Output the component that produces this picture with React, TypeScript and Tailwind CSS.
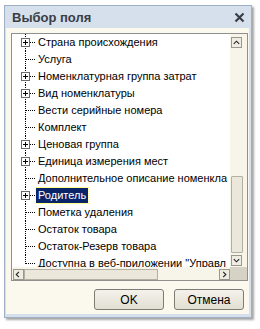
import React from "react";

type Item = { label: string; expandable?: boolean; selected?: boolean };

const items: Item[] = [
  { label: "Страна происхождения", expandable: true },
  { label: "Услуга" },
  { label: "Номенклатурная группа затрат", expandable: true },
  { label: "Вид номенклатуры", expandable: true },
  { label: "Вести серийные номера" },
  { label: "Комплект" },
  { label: "Ценовая группа", expandable: true },
  { label: "Единица измерения мест", expandable: true },
  { label: "Дополнительное описание номенкла" },
  { label: "Родитель", expandable: true, selected: true },
  { label: "Пометка удаления" },
  { label: "Остаток товара" },
  { label: "Остаток-Резерв товара" },
  { label: "Доступна в веб-приложении \"Управл" },
];

function TreeLines({ expandable, last }: { expandable?: boolean; last?: boolean }) {
  return (
    <svg width="24" height="17" className="shrink-0" shapeRendering="crispEdges">
      <line x1="13.5" y1="0" x2="13.5" y2={last ? 8.5 : 17} stroke="#000" strokeDasharray="1 1" />
      <line x1="14" y1="8.5" x2="24" y2="8.5" stroke="#000" strokeDasharray="1 1" />
      {expandable && (
        <>
          <rect x="9.5" y="4.5" width="8" height="8" fill="#fff" stroke="#6b6b6b" />
          <line x1="11" y1="8.5" x2="16" y2="8.5" stroke="#000" />
          <line x1="13.5" y1="6" x2="13.5" y2="11" stroke="#000" />
        </>
      )}
    </svg>
  );
}

function Arrow({ dir }: { dir: "up" | "down" | "left" | "right" }) {
  const d = {
    up: "M2.5 6.5 L5.5 3.5 L8.5 6.5",
    down: "M2.5 3.5 L5.5 6.5 L8.5 3.5",
    left: "M6 2 L3 5 L6 8",
    right: "M4 2 L7 5 L4 8",
  }[dir];
  return (
    <div className="w-[11px] h-[11px] border border-[#9a978c] bg-[#efece3] flex items-center justify-center shrink-0">
      <svg width="9" height="9" viewBox="1 0 9 10">
        <path d={d} fill="none" stroke="#222" strokeWidth="1.2" />
      </svg>
    </div>
  );
}

export default function App() {
  return (
    <div className="w-[260px] h-[329px] bg-white pt-[5px] pl-[4px]" style={{ fontFamily: '"Liberation Sans", Arial, sans-serif' }}>
      <div className="w-[248px] h-[313px] border border-[#9fb0c6] bg-[#d6e0ec] shadow-[2px_2px_2px_rgba(0,0,0,0.35)] flex flex-col">
        {/* title */}
        <div className="h-[22px] flex items-center justify-between pl-[7px] pr-[6px] shrink-0">
          <span className="text-[13px] font-bold text-[#3a3d44] leading-none">Выбор поля</span>
          <svg width="11" height="11" viewBox="0 0 11 11">
            <path d="M1.5 1.5 L9.5 9.5 M9.5 1.5 L1.5 9.5" stroke="#3a3d44" strokeWidth="2.2" />
          </svg>
        </div>

        {/* body */}
        <div className="flex-1 ml-[1px] mr-[2px] mb-[3px] bg-[#fbf8ee] flex flex-col pl-[5px] pr-[1px] pt-[5px]">
          <div className="h-[248px] border border-[#8f8f8f] bg-white flex flex-col overflow-hidden">
            <div className="flex flex-1 min-h-0">
              {/* tree */}
              <div className="flex-1 min-w-0 overflow-hidden text-[11px] text-black">
                {items.map((it, i) => (
                  <div key={it.label} className="h-[17px] flex items-center whitespace-nowrap">
                    <TreeLines expandable={it.expandable} last={i === items.length - 1} />
                    <span
                      className={
                        it.selected
                          ? "px-[2px] h-[15px] leading-[15px] bg-[#0a246a] text-white outline outline-1 outline-dotted outline-[#ffff80]"
                          : "px-[2px] leading-[15px]"
                      }
                    >
                      {it.label}
                    </span>
                  </div>
                ))}
              </div>
              {/* vertical scrollbar */}
              <div className="w-[17px] shrink-0 bg-[#f7f4ea] flex flex-col pl-[1px] pt-[3px] pb-[1px]">
                <Arrow dir="up" />
                <div className="flex-1 flex flex-col justify-end pt-[2px] pb-[2px]">
                  <div className="w-[12px] h-[77px] border border-[#b3afa3] bg-[#ebe7db] rounded-[1px]" />
                </div>
                <Arrow dir="down" />
              </div>
            </div>
            {/* horizontal scrollbar */}
            <div className="h-[13px] shrink-0 flex bg-[#f7f4ea]">
              <div className="flex-1 flex items-center pl-[1px] pt-[1px]">
                <Arrow dir="left" />
                <div className="w-[134px] h-[11px] border border-[#b3afa3] bg-[#ebe7db]" />
                <div className="flex-1" />
                <Arrow dir="right" />
              </div>
              <div className="w-[17px] bg-[#d6d2c6]" />
            </div>
          </div>

          {/* buttons */}
          <div className="flex justify-end gap-[10px] mt-[8px] pr-[4px]">
            <button className="w-[70px] h-[21px] border border-[#7d7b73] rounded-[3px] bg-gradient-to-b from-[#f4f2eb] to-[#e2ded2] text-[12px] text-black leading-none">
              OK
            </button>
            <button className="w-[70px] h-[21px] border border-[#7d7b73] rounded-[3px] bg-gradient-to-b from-[#f4f2eb] to-[#e2ded2] text-[12px] text-black leading-none">
              Отмена
            </button>
          </div>
        </div>
      </div>
    </div>
  );
}
